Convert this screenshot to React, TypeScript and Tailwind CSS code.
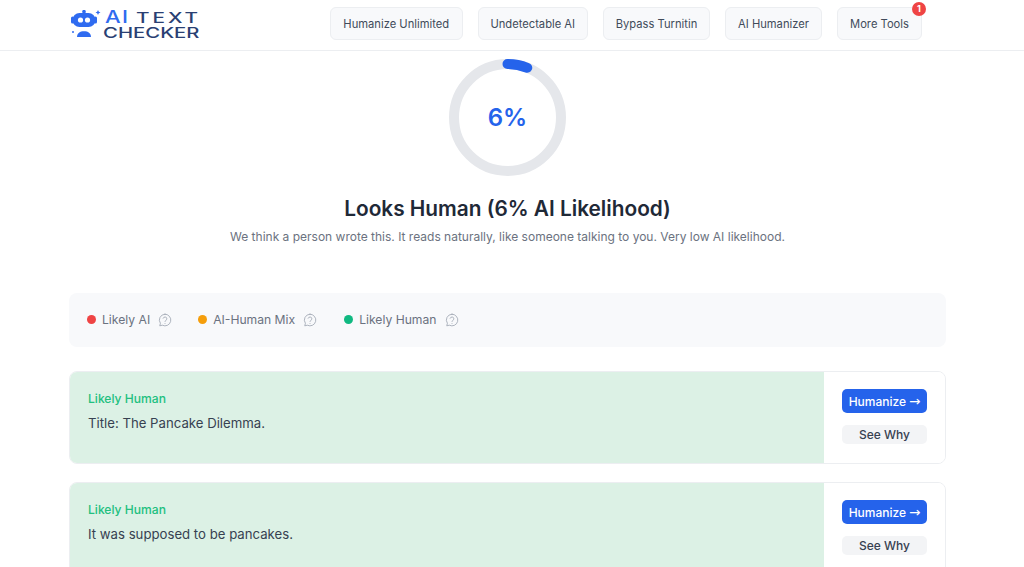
const font = "font-['Inter','Liberation_Sans',sans-serif]";

function Logo() {
  return (
    <div className="flex w-[130px] shrink-0 items-start pl-[1px] pt-[10px]">
      <svg width="31" height="28" viewBox="0 0 31 28" className="shrink-0">
        <rect x="11.800" y="0" width="2.400" height="5" fill="#2f6bf0" />
        <circle cx="13" cy="1.800" r="1.800" fill="#2f6bf0" />
        <rect x="0" y="6.500" width="3" height="7" rx="1.500" fill="#2f6bf0" />
        <rect x="23" y="6.500" width="3" height="7" rx="1.500" fill="#2f6bf0" />
        <rect x="1.500" y="3" width="23" height="14" rx="7" fill="#2f6bf0" />
        <circle cx="9.500" cy="10" r="2.600" fill="#fff" />
        <circle cx="16.500" cy="10" r="2.600" fill="#fff" />
        <path d="M6 27c0-3.800 3-5.800 7-5.800s7 2 7 5.800z" fill="#2f6bf0" />
        <circle cx="2" cy="22" r="1" fill="#2f6bf0" />
        <path d="M27 0l.8 1.700 1.700.8-1.700.8-.8 1.700-.8-1.700-1.700-.8 1.700-.8z" fill="#2f6bf0" />
      </svg>
      <div className="ml-[1px] -mt-[1px] flex flex-col font-['Inter',sans-serif] font-medium leading-none">
        <div className="flex h-[16px] items-end">
          <span className="ml-[2px] inline-block w-[31px] origin-left scale-x-[1.3] text-[17px] leading-[16px] tracking-[1px] text-[#2f6bf0]">AI</span>
          <span className="inline-block w-[62px] origin-left scale-x-[1.48] text-[14px] leading-[14px] tracking-[2px] text-[#2a3f73]">TEXT</span>
        </div>
        <div className="mt-[1px] w-[97px] origin-left scale-x-[1.45] text-[14px] leading-[14px] text-[#2a3f73]">CHECKER</div>
      </div>
    </div>
  );
}

function NavButton({ label, width, badge }: { label: string; width: string; badge?: boolean }) {
  return (
    <div className={`relative flex h-[33px] items-center justify-center rounded-md border border-[#eceef1] bg-[#f8f9fb] pt-[1px] text-[11.2px] text-[#414b5a] ${width}`}>
      {label}
      {badge && (
        <span className="absolute right-[-5px] top-[-6px] flex h-[14px] w-[14px] items-center justify-center rounded-full bg-[#ef4444] text-[9px] font-bold text-white">
          1
        </span>
      )}
    </div>
  );
}

function Help() {
  return (
    <svg width="14" height="14" viewBox="0 0 24 24" fill="none" stroke="#9ca3af" strokeWidth="1.400" strokeLinecap="round" strokeLinejoin="round">
      <path d="M12 2a10 10 0 1 1-4.600 18.900L3 22l1.100-4.400A10 10 0 0 1 12 2z" />
      <path d="M8.800 9a3.300 3.300 0 0 1 6.400 1c0 2.200-3.200 2.600-3.200 4.500" />
      <path d="M12 18h.01" />
    </svg>
  );
}

function LegendItem({ label, dot, mr }: { label: string; dot: string; mr: string }) {
  return (
    <div className={`flex items-center ${mr}`}>
      <span className={`h-[9px] w-[9px] rounded-full ${dot}`} />
      <span className="ml-[6px] mr-[8px] text-[12.150px] text-[#6b7280]">{label}</span>
      <Help />
    </div>
  );
}

function Card({ text }: { text: string }) {
  return (
    <div className="flex h-[93px] w-full shrink-0 overflow-hidden rounded-lg border border-[#eceef1]">
      <div className="flex-1 bg-[#dcf1e5] pl-[18px] pt-[19px]">
        <div className="text-[12.100px] font-medium leading-[16px] text-[#22c07f]">Likely Human</div>
        <div className="mt-[7px] text-[13.200px] leading-[18px] text-[#374151]">{text}</div>
      </div>
      <div className="flex w-[121px] flex-col items-center bg-white pt-[17px]">
        <div className="flex h-[24px] w-[85px] items-center justify-center gap-[3px] rounded-[5px] bg-[#2563eb] pt-[1px] text-[12px] font-medium text-white">
          Humanize <span className="font-['DejaVu_Sans',sans-serif] text-[13.500px] font-normal leading-none">→</span>
        </div>
        <div className="mt-[12px] flex h-[19px] w-[85px] items-center justify-center rounded-[5px] bg-[#f3f4f6] text-[12px] font-medium text-[#374151]">See Why</div>
      </div>
    </div>
  );
}

export default function App() {
  return (
    <div className={`flex h-[567px] w-[1024px] flex-col overflow-hidden bg-white ${font}`}>
      <header className="flex h-[51px] shrink-0 items-start border-b border-[#eceef1] pl-[70px]">
        <Logo />
        <nav className="ml-[130px] flex items-center gap-[15px] pt-[7px]">
          <NavButton label="Humanize Unlimited" width="w-[132.500px]" />
          <NavButton label="Undetectable AI" width="w-[110.500px]" />
          <NavButton label="Bypass Turnitin" width="w-[107px]" />
          <NavButton label="AI Humanizer" width="w-[97px]" />
          <NavButton label="More Tools" width="w-[85px]" badge />
        </nav>
      </header>
      <main className="flex w-[1015px] flex-col items-center">
        <div className="relative mt-[8px] h-[117px] w-[117px]">
          <svg width="117" height="117" viewBox="0 0 117 117">
            <circle cx="58.500" cy="58.500" r="53.500" fill="none" stroke="#e5e7eb" strokeWidth="10" />
            <circle cx="58.500" cy="58.500" r="53.500" fill="none" stroke="#2563eb" strokeWidth="10" strokeLinecap="round" strokeDasharray="20.200 336.100" transform="rotate(-90 58.500 58.500)" />
          </svg>
          <div className="absolute inset-0 flex items-center justify-center text-[24px] font-semibold text-[#2563eb]">6%</div>
        </div>
        <h1 className="mt-[19px] text-[20.800px] font-semibold leading-[28px] text-[#1f2937]">Looks Human (6% AI Likelihood)</h1>
        <p className="mt-[6px] text-[12px] leading-[16px] text-[#6b7280]">We think a person wrote this. It reads naturally, like someone talking to you. Very low AI likelihood.</p>
        <div className="mt-[48px] flex w-[877px] flex-col gap-[18px]">
          <div className="mb-[6px] flex h-[54px] items-center rounded-lg bg-[#f8f9fb] pl-[18px]">
            <LegendItem label="Likely AI" dot="bg-[#ef4444]" mr="mr-[26px]" />
            <LegendItem label="AI-Human Mix" dot="bg-[#f59e0b]" mr="mr-[27px]" />
            <LegendItem label="Likely Human" dot="bg-[#10b981]" mr="" />
          </div>
          <Card text="Title: The Pancake Dilemma." />
          <Card text="It was supposed to be pancakes." />
        </div>
      </main>
    </div>
  );
}
